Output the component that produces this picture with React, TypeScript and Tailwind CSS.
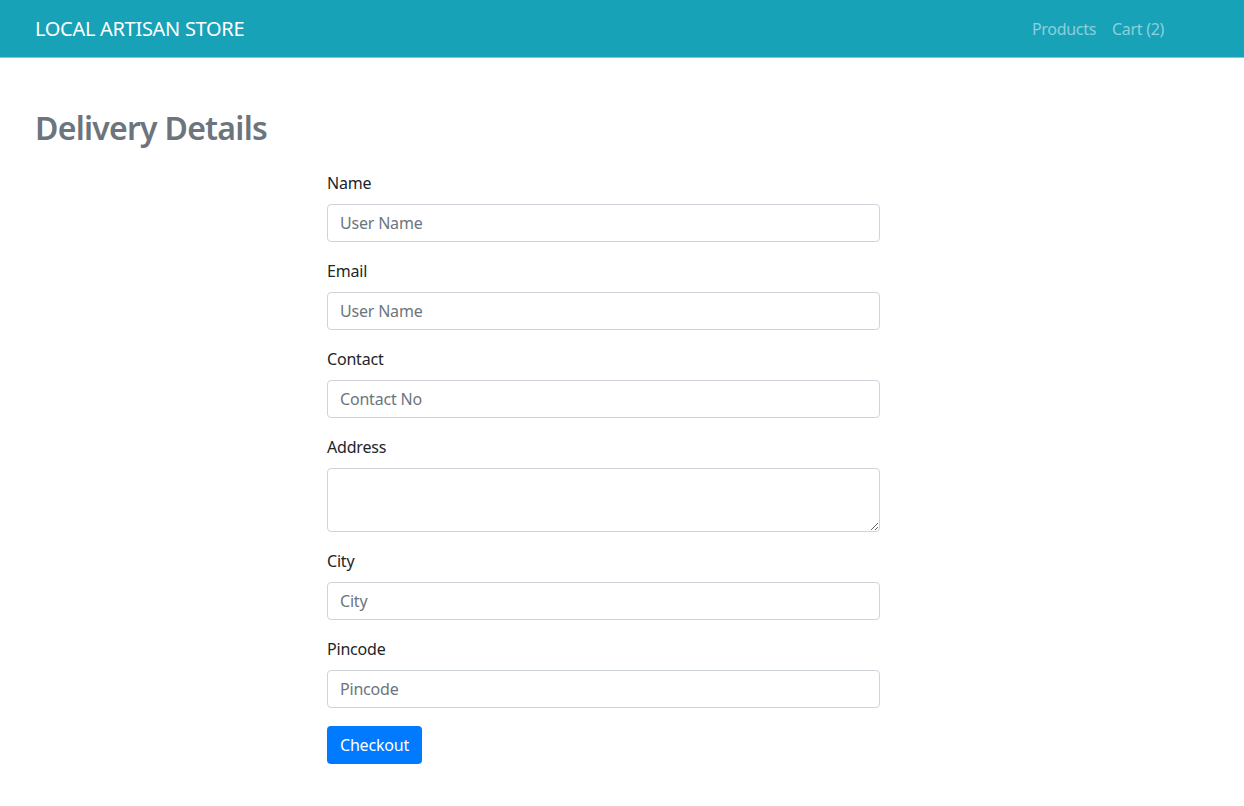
const fields = [
  { label: 'Name', placeholder: 'User Name' },
  { label: 'Email', placeholder: 'User Name' },
  { label: 'Contact', placeholder: 'Contact No' },
];

const fieldsAfter = [
  { label: 'City', placeholder: 'City' },
  { label: 'Pincode', placeholder: 'Pincode' },
];

const font = { fontFamily: '"Segoe UI", "Noto Sans", "Open Sans", sans-serif' };

function Field({ label, placeholder }: { label: string; placeholder: string }) {
  return (
    <div className="mb-4">
      <label className="mb-2 block h-[26px] leading-[26px] text-[16px] tracking-[-0.2px] text-[#212529]">{label}</label>
      <input
        className="block h-[38px] w-full rounded-[4px] border border-[#ced4da] px-3 text-[16px] tracking-[-0.2px] text-[#495057] placeholder:text-[#6c757d] outline-none"
        placeholder={placeholder}
        type="text"
      />
    </div>
  );
}

export default function App() {
  return (
    <div className="min-h-screen bg-white" style={font}>
      <nav className="flex h-[58px] items-center justify-between border-b border-[#7ccad6] bg-[#17a2b8] pl-[35px] pr-[72px]">
        <a className="text-[20px] leading-[30px] tracking-[-0.3px] text-white" href="#">
          LOCAL ARTISAN STORE
        </a>
        <div className="flex text-[16px] tracking-[-0.3px] text-white/50">
          <a className="px-2 leading-6" href="#">
            Products
          </a>
          <a className="px-2 leading-6" href="#">
            Cart (2)
          </a>
        </div>
      </nav>

      <div className="px-[35px] pt-[51px]">
        <h2 className="text-[32px] font-semibold leading-[38px] tracking-[-0.75px] text-[#6c757d]">Delivery Details</h2>
      </div>

      <form className="ml-[327px] mt-[23px] w-[553px]">
        {fields.map((f) => (
          <Field key={f.label} label={f.label} placeholder={f.placeholder} />
        ))}
        <div className="mb-4">
          <label className="mb-2 block h-[26px] leading-[26px] text-[16px] tracking-[-0.2px] text-[#212529]">Address</label>
          <textarea
            className="block h-[64px] w-full rounded-[4px] border border-[#ced4da] px-3 py-1.5 text-[16px] outline-none"
            rows={2}
          />
        </div>
        {fieldsAfter.map((f) => (
          <Field key={f.label} label={f.label} placeholder={f.placeholder} />
        ))}
        <button
          className="mt-[2px] h-[38px] w-[95px] rounded-[4px] bg-[#007bff] text-[16px] tracking-[-0.2px] text-white"
          type="button"
        >
          Checkout
        </button>
      </form>
    </div>
  );
}
